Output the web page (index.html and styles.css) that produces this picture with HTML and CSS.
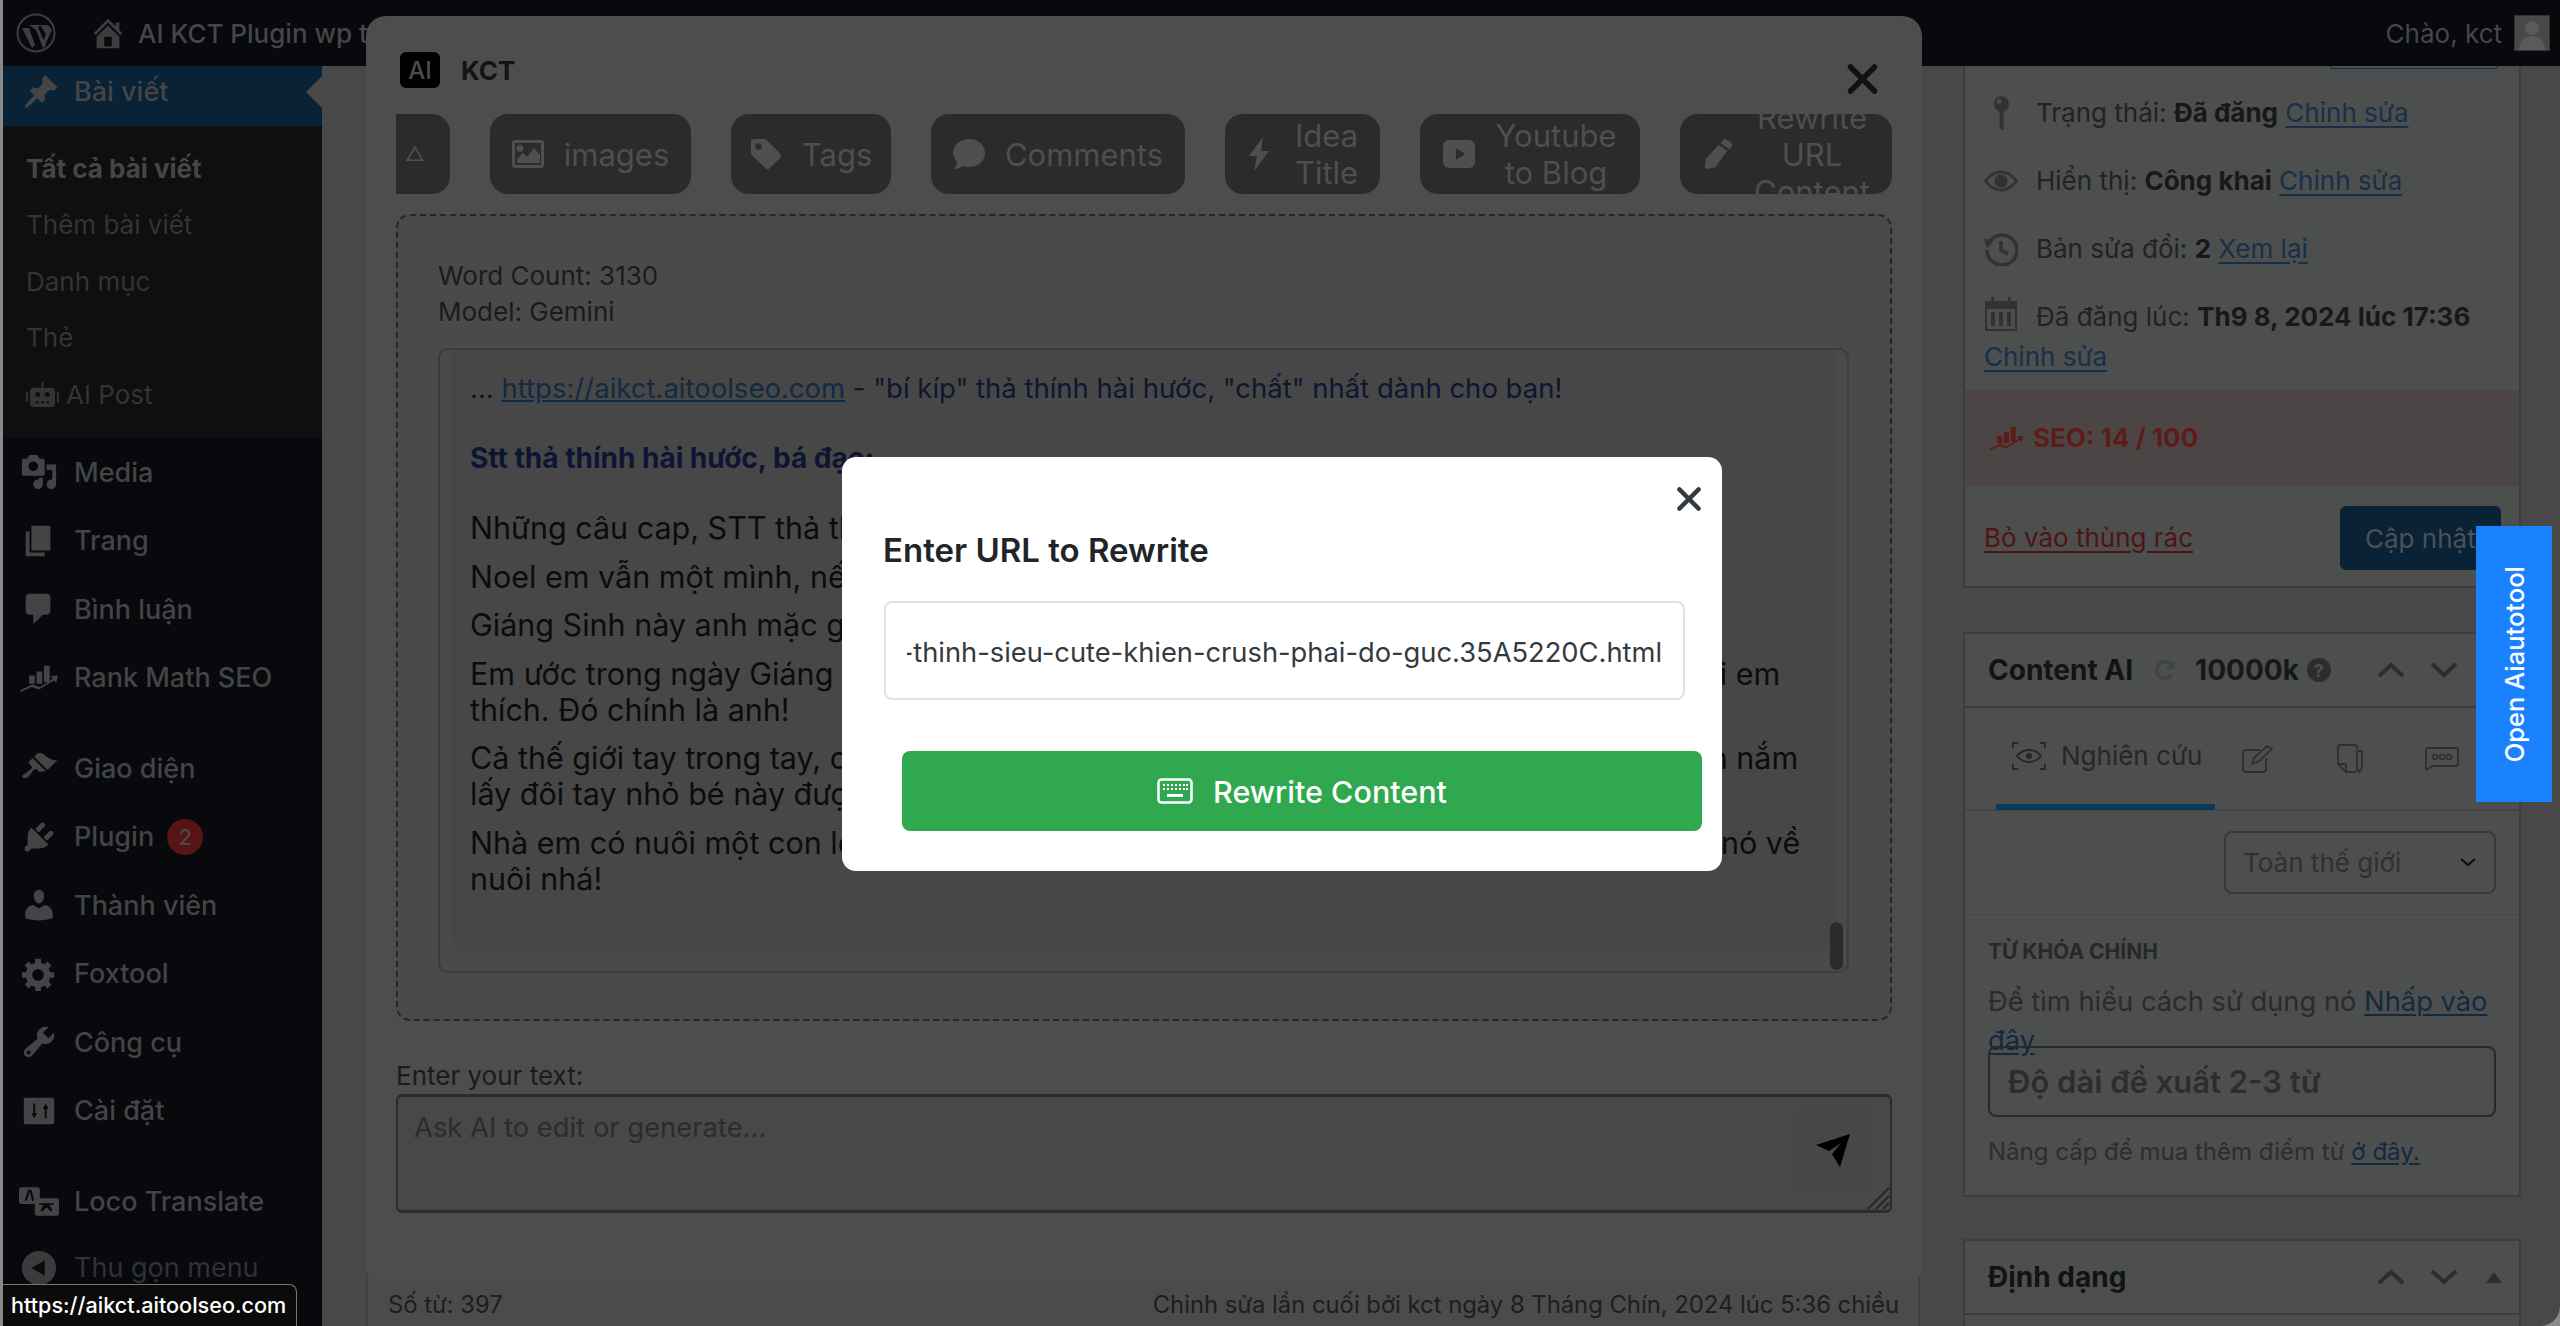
FILE: index.html
```html
<!DOCTYPE html>
<html lang="vi">
<head>
<meta charset="utf-8">
<title>Chỉnh sửa bài viết</title>
<link rel="stylesheet" href="styles.css">
</head>
<body>
<svg class="defs" width="0" height="0">
  <symbol id="chev-up" viewBox="0 0 28 16"><path d="M2 14 14 3l12 11" fill="none" stroke="currentColor" stroke-width="4"/></symbol>
  <symbol id="chev-down" viewBox="0 0 28 16"><path d="M2 2l12 11L26 2" fill="none" stroke="currentColor" stroke-width="4"/></symbol>
  <symbol id="rank" viewBox="0 0 48 34"><path d="M12 14h7v10h-7zM21 9h7v15h-7zM30 2h7v20h-7z"/><path d="M1 32 16 25l9 3 16-10-3-3 9-1-2 9-3-3-18 11-9-3-13 6z"/></symbol>
  <symbol id="close-x" viewBox="0 0 30 30"><path d="M3 3l24 24M27 3 3 27" fill="none" stroke="currentColor" stroke-width="5.500" stroke-linecap="round"/></symbol>
</svg>

<div class="window">
  <header class="adminbar">
    <svg class="wp-logo" viewBox="0 0 40 40"><circle cx="20" cy="20" r="18.5" fill="none" stroke="currentColor" stroke-width="2"/><path d="M6 15h7l6 17-3 3zM13 12h12l-3 2 8 19-3 2-7-18-4-3zM24 12h8l4 5-7 15-2-3 3-8z"/></svg>
    <svg class="home-icon" viewBox="0 0 20 20"><path d="M16 8.5l1.53 1.53-1.06 1.06L10 4.62l-6.47 6.47-1.06-1.06L10 2.5l4 4v-2h2v4zm-6-2.46l6 5.99V18H4v-5.97zM12 17v-5H8v5h4z"/></svg>
    <span class="site-name">AI KCT Plugin wp thử nghiệm</span>
    <span class="howdy">Chào, kct</span>
    <svg class="avatar" viewBox="0 0 36 36"><rect width="36" height="36" fill="#313233"/><rect x="1" y="1" width="34" height="34" fill="#474848"/><circle cx="18" cy="13" r="7" fill="#5a5a5a"/><path d="M5 35c0-10 6-14 13-14s13 4 13 14z" fill="#5a5a5a"/></svg>
  </header>

  <div class="wrap">
    <nav class="sidebar">
      <a class="menu-current">
        <svg viewBox="0 0 20 20"><path d="M10.44 3.02l1.82-1.82 6.36 6.35-1.83 1.82c-1.05-.68-2.48-.57-3.41.36l-.75.75c-.92.93-1.04 2.35-.35 3.41l-1.83 1.82-2.41-2.41-2.8 2.79c-.42.42-3.38 2.71-3.8 2.29s1.86-3.39 2.28-3.81l2.79-2.79L4.1 9.36l1.83-1.82c1.05.69 2.48.57 3.4-.36l.75-.75c.93-.92 1.05-2.35.36-3.41z"/></svg>
        Bài viết
      </a>
      <ul class="submenu">
        <li class="sub-current">Tất cả bài viết</li>
        <li>Thêm bài viết</li>
        <li>Danh mục</li>
        <li>Thẻ</li>
        <li><svg class="robot" viewBox="0 0 34 26"><path d="M8 6h18a4 4 0 0 1 4 4v12a4 4 0 0 1-4 4H8a4 4 0 0 1-4-4V10a4 4 0 0 1 4-4zM16 0h2v6h-2zM0 11h2v10H0zM32 11h2v10h-2z"/><circle cx="12" cy="13" r="2.6" fill="#0d0f11"/><circle cx="22" cy="13" r="2.6" fill="#0d0f11"/><path d="M10 20h3v2h-3zM15.500 20h3v2h-3zM21 20h3v2h-3z" fill="#0d0f11"/></svg>AI Post</li>
      </ul>
      <div class="menu-group">
        <a class="menu-item"><svg viewBox="0 0 20 20"><path d="M13 11V4c0-.55-.45-1-1-1h-1.670L9 1H5L3.670 3H2c-.55 0-1 .45-1 1v7c0 .55.45 1 1 1h10c.55 0 1-.45 1-1zM7 4.500c1.380 0 2.500 1.120 2.500 2.500S8.380 9.500 7 9.500 4.500 8.380 4.500 7 5.620 4.500 7 4.500zM14 6h5v10.500c0 1.380-1.120 2.500-2.500 2.500S14 17.880 14 16.500s1.120-2.500 2.500-2.500c.17 0 .34.02.5.05V9h-3V6zm-4 8.050V13h2v3.500c0 1.380-1.120 2.500-2.500 2.500S7 17.880 7 16.500 8.120 14 9.500 14c.17 0 .34.02.5.05z"/></svg>Media</a>
        <a class="menu-item"><svg viewBox="0 0 20 20"><path d="M6 15V2h10v13H6zm-1 1h8v2H3V5h2v11z"/></svg>Trang</a>
        <a class="menu-item"><svg viewBox="0 0 20 20"><path d="M5 2h9c1.100 0 2 .9 2 2v7c0 1.100-.9 2-2 2h-2l-5 5v-5H5c-1.100 0-2-.9-2-2V4c0-1.100.9-2 2-2z"/></svg>Bình luận</a>
        <a class="menu-item"><svg class="wide" viewBox="0 0 48 34"><use href="#rank"/></svg>Rank Math SEO</a>
      </div>
      <div class="menu-group">
        <a class="menu-item"><svg viewBox="0 0 20 20"><path d="M14.480 11.060L7.410 3.990l1.500-1.500c.5-.56 2.300-.47 3.510.32 1.210.8 1.430 1.280 2.910 2.100 1.180.64 2.450 1.260 4.450.85zm-.71.71L6.700 4.700 4.930 6.470c-.39.39-.39 1.020 0 1.410l1.060 1.060c.39.39.39 1.030 0 1.420-.6.6-1.430 1.110-2.210 1.690-.35.26-.7.53-1.010.84C1.430 13.230.9 14.560 1.620 15.180c.62.62 1.950.19 3.290-1.150.31-.31.58-.66.84-1.010.58-.78 1.090-1.610 1.690-2.210.39-.39 1.030-.39 1.420 0l1.060 1.060c.39.39 1.020.39 1.410 0z"/></svg>Giao diện</a>
        <a class="menu-item"><svg viewBox="0 0 20 20"><path d="M13.110 4.360L9.870 7.600 8 5.730l3.240-3.240c.35-.34 1.050-.2 1.560.32.52.51.66 1.210.31 1.550zm-8 1.770l.91-1.120 9.010 9.010-1.190.84c-.71.71-2.630 1.160-3.820 1.160H6.140L4.900 17.260c-.59.59-1.540.59-2.120 0-.59-.58-.59-1.530 0-2.120l1.240-1.240v-3.880c0-1.130.4-3.190 1.090-3.890zm7.260 3.970l3.240-3.240c.34-.35 1.040-.21 1.550.31.52.51.66 1.210.31 1.550l-3.240 3.250z"/></svg>Plugin<span class="badge">2</span></a>
        <a class="menu-item"><svg viewBox="0 0 20 20"><path d="M10 9.250c-2.270 0-2.730-3.440-2.730-3.440C7 4.020 7.820 2 9.970 2c2.160 0 2.980 2.020 2.710 3.810 0 0-.41 3.440-2.680 3.440zm0 2.570L12.720 10c2.390 0 4.520 2.330 4.520 4.530v2.490s-3.650 1.130-7.240 1.130c-3.650 0-7.240-1.130-7.240-1.130v-2.490c0-2.250 1.940-4.480 4.470-4.480z"/></svg>Thành viên</a>
        <a class="menu-item"><svg viewBox="0 0 20 20"><path d="M18 12h-2.180c-.17.7-.44 1.350-.81 1.930l1.540 1.540-2.100 2.100-1.540-1.540c-.58.36-1.230.63-1.910.79V19H8v-2.180c-.68-.16-1.330-.43-1.910-.79l-1.540 1.540-2.120-2.120 1.540-1.540c-.36-.58-.63-1.230-.79-1.910H1V9.030h2.170c.16-.7.44-1.350.8-1.940L2.430 5.550l2.100-2.100 1.540 1.540c.58-.37 1.240-.64 1.930-.81V2h3v2.180c.68.16 1.330.43 1.910.79l1.540-1.540 2.120 2.120-1.540 1.540c.36.59.64 1.240.8 1.940H18V12zm-8.500 1.500c1.660 0 3-1.340 3-3s-1.340-3-3-3-3 1.340-3 3 1.340 3 3 3z"/></svg>Foxtool</a>
        <a class="menu-item"><svg viewBox="0 0 20 20"><path d="M16.680 9.770c-1.340 1.340-3.300 1.670-4.950.99l-5.410 6.520c-.99.99-2.590.99-3.580 0s-.99-2.590 0-3.570l6.520-5.420c-.68-1.650-.35-3.610.99-4.950 1.280-1.280 3.120-1.620 4.720-1.060l-2.890 2.890 2.820 2.820 2.860-2.870c.53 1.580.18 3.390-1.080 4.650zM3.810 16.210c.4.39 1.040.39 1.430 0 .4-.4.4-1.040 0-1.430-.39-.4-1.030-.4-1.430 0-.39.39-.39 1.030 0 1.430z"/></svg>Công cụ</a>
        <a class="menu-item"><svg viewBox="0 0 20 20"><path fill-rule="evenodd" d="M18 16V4c0-.55-.45-1-1-1H3c-.55 0-1 .45-1 1v12c0 .55.45 1 1 1h14c.55 0 1-.45 1-1zM8 11h1l-1.500 3-1.500-3h1V6h1zM13 9h1v5h-1V9h-1l1.500-3L15 9z"/></svg>Cài đặt</a>
      </div>
      <div class="menu-group menu-group-last">
        <a class="menu-item"><svg class="wide loco" viewBox="0 0 48 34"><path d="M3 0h19a3 3 0 0 1 3 3v14a3 3 0 0 1-3 3H3a3 3 0 0 1-3-3V3a3 3 0 0 1 3-3z"/><path d="M8 16 12 4h2l3 12" fill="none" stroke="#08090c" stroke-width="2.500"/><path fill-rule="evenodd" d="M22 13h23a3 3 0 0 1 3 3v15a3 3 0 0 1-3 3H22a3 3 0 0 1-3-3V16a3 3 0 0 1 3-3zm2 6v2h5l-3 7 2 1 5-5 5 5 2-1-3-7h5v-2z"/></svg>Loco Translate</a>
      </div>
      <a class="menu-collapse"><svg viewBox="0 0 20 20"><path fill-rule="evenodd" d="M10 1a9 9 0 1 1 0 18 9 9 0 0 1 0-18zm3 5-7 4 7 4z"/></svg>Thu gọn menu</a>
    </nav>

    <main class="content">
      <section class="editor">
        <div class="editor-body"></div>
        <div class="statusline"><span>Số từ: 397</span><span>Chỉnh sửa lần cuối bởi kct ngày 8 Tháng Chín, 2024 lúc 5:36 chiều</span></div>
      </section>

      <aside class="side">
        <div class="box box-publish">
          <div class="preview-stub"></div>
          <div class="pub-row">
            <svg class="pub-icon" viewBox="0 0 34 34"><path d="M17 0a8 8 0 0 1 2.500 15.600V34h-2l-2-3V15.600A8 8 0 0 1 17 0zm-2 3a2.500 2.500 0 1 0 0 5 2.500 2.500 0 0 0 0-5z" fill-rule="evenodd"/></svg>
            <span>Trạng thái: <b>Đã đăng</b> <a>Chỉnh sửa</a></span>
          </div>
          <div class="pub-row">
            <svg class="pub-icon" viewBox="0 0 36 24"><path fill-rule="evenodd" d="M18 1c8 0 14 5 18 11-4 6-10 11-18 11S4 18 0 12C4 6 10 1 18 1zm0 3C12 4 7 7.500 3.500 12 7 16.500 12 20 18 20s11-3.500 14.500-8C29 7.500 24 4 18 4zm0 1a7 7 0 1 1 0 14 7 7 0 0 1 0-14z"/></svg>
            <span>Hiển thị: <b>Công khai</b> <a>Chỉnh sửa</a></span>
          </div>
          <div class="pub-row">
            <svg class="pub-icon" viewBox="0 0 34 34"><path fill="none" stroke="currentColor" stroke-width="3.500" d="M6 9a15 15 0 1 1-3 9M17 9v9l7 4"/><path d="M0 7l10 1-7 9z"/></svg>
            <span>Bản sửa đổi: <b>2</b> <a>Xem lại</a></span>
          </div>
          <div class="pub-row pub-row-wrap">
            <svg class="pub-icon" viewBox="0 0 32 34"><path fill-rule="evenodd" d="M0 4h6V0h3v4h14V0h3v4h6v30H0zm2 8v20h28V12zM6 15h4v14H6zm8 0h4v14h-4zm8 0h4v14h-4z"/></svg>
            <span>Đã đăng lúc: <b>Th9 8, 2024 lúc 17:36</b><br><a>Chỉnh sửa</a></span>
          </div>
          <div class="seo-band">
            <svg class="seo-icon" viewBox="0 0 48 34"><use href="#rank"/></svg>
            <b>SEO: 14 / 100</b>
          </div>
          <div class="pub-footer">
            <a class="trash">Bỏ vào thùng rác</a>
            <button class="update-btn">Cập nhật</button>
          </div>
        </div>

        <div class="box box-ai">
          <div class="box-head">
            <h2>Content AI</h2>
            <svg class="refresh" viewBox="0 0 20 20"><path d="M16 5.500a7.500 7.500 0 1 0 0 9" fill="none" stroke="currentColor" stroke-width="3.500"/><path d="M19 1v8h-8z"/></svg>
            <b class="credits">10000k</b>
            <span class="help">?</span>
            <svg class="chev chev-first"><use href="#chev-up"/></svg>
            <svg class="chev"><use href="#chev-down"/></svg>
          </div>
          <div class="ai-tabs">
            <div class="ai-tab-active">
              <svg class="scan" viewBox="0 0 34 28"><path fill="none" stroke="currentColor" stroke-width="1.800" d="M1 6V1h5M28 1h5v5M1 22v5h5M28 27h5v-5M5 14c3-4 7-6 12-6s9 2 12 6c-3 4-7 6-12 6s-9-2-12-6z"/><circle cx="17" cy="14" r="3"/></svg>
              Nghiên cứu
            </div>
            <svg class="tab-ico ico-edit" viewBox="0 0 32 30"><path fill="none" stroke="currentColor" stroke-width="1.800" d="M24 14v11a3 3 0 0 1-3 3H4a3 3 0 0 1-3-3V9a3 3 0 0 1 3-3h14M10 20l2-6L25 2l5 3-13 12z"/></svg>
            <svg class="tab-ico ico-doc" viewBox="0 0 26 30"><path fill="none" stroke="currentColor" stroke-width="1.800" d="M20 5V3a2 2 0 0 0-2-2H3a2 2 0 0 0-2 2v17l8 8h9a2 2 0 0 0 2-2M1 20h6a2 2 0 0 1 2 2v6M20 7h5v17l-2.500 4-2.500-4z"/></svg>
            <svg class="tab-ico ico-chat" viewBox="0 0 34 24"><path fill="none" stroke="currentColor" stroke-width="1.800" d="M3 1h28a2 2 0 0 1 2 2v14a2 2 0 0 1-2 2H8l-7 4V3a2 2 0 0 1 2-2z"/><circle cx="10" cy="10" r="2.500" fill="none" stroke="currentColor" stroke-width="1.500"/><circle cx="17" cy="10" r="2.500" fill="none" stroke="currentColor" stroke-width="1.500"/><circle cx="24" cy="10" r="2.500" fill="none" stroke="currentColor" stroke-width="1.500"/></svg>
          </div>
          <div class="ai-region">
            <div class="region-select">Toàn thế giới<svg viewBox="0 0 16 9"><path d="M1 1l7 6 7-6" fill="none" stroke="#0b0b0b" stroke-width="2"/></svg></div>
          </div>
          <div class="ai-keyword">
            <h3>TỪ KHÓA CHÍNH</h3>
            <p class="kw-help">Để tìm hiểu cách sử dụng nó <a>Nhấp vào đây</a></p>
            <div class="kw-input">Độ dài đề xuất 2-3 từ</div>
            <p class="kw-upgrade">Nâng cấp để mua thêm điểm từ <a>ở đây.</a></p>
          </div>
        </div>

        <div class="box box-format">
          <div class="box-head">
            <h2>Định dạng</h2>
            <svg class="chev chev-far"><use href="#chev-up"/></svg>
            <svg class="chev"><use href="#chev-down"/></svg>
            <span class="caret"></span>
          </div>
        </div>
      </aside>
    </main>
  </div>

  <div class="kct-modal">
    <div class="kct-head">
      <span class="kct-logo">AI</span>
      <strong>KCT</strong>
      <svg class="kct-close"><use href="#close-x"/></svg>
    </div>
    <div class="kct-tabs">
      <div class="kct-tab tab-cut">△</div>
      <div class="kct-tab tab-images"><svg viewBox="0 0 32 28"><path fill-rule="evenodd" d="M3 0h26a3 3 0 0 1 3 3v22a3 3 0 0 1-3 3H3a3 3 0 0 1-3-3V3a3 3 0 0 1 3-3zm0 3v22h26V3zm5 2a3.500 3.500 0 1 1 0 7 3.500 3.500 0 0 1 0-7zM5 23v-4l6-6 4 4 7-9 6 7v8z"/></svg><span>images</span></div>
      <div class="kct-tab tab-tags"><svg viewBox="0 0 28 28"><path fill-rule="evenodd" d="M0 3a3 3 0 0 1 3-3h9c1 0 2 .4 2.700 1.100l12 12a3.500 3.500 0 0 1 0 5l-8.600 8.800a3.500 3.500 0 0 1-5 0L1 15.500A4 4 0 0 1 0 13zm7 1a3 3 0 1 0 0 6 3 3 0 0 0 0-6z"/></svg><span>Tags</span></div>
      <div class="kct-tab tab-comments"><svg viewBox="0 0 32 30"><path d="M16 0c9 0 16 6 16 14s-7 14-16 14c-2.300 0-4.500-.4-6.400-1.100C8 28.500 4.500 30 1 30c1.500-1.500 3-4 3.300-6.700C1.600 20.800 0 17.600 0 14 0 6 7 0 16 0z"/></svg><span>Comments</span></div>
      <div class="kct-tab tab-idea"><svg class="bolt" viewBox="0 0 22 34"><path d="M15 0 1 19h8L6 34l15-20h-8z"/></svg><span>Idea<br>Title</span></div>
      <div class="kct-tab tab-youtube"><svg viewBox="0 0 32 28"><path fill-rule="evenodd" d="M6 0h20a6 6 0 0 1 6 6v16a6 6 0 0 1-6 6H6a6 6 0 0 1-6-6V6a6 6 0 0 1 6-6zm7 8v12l9-6z"/></svg><span>Youtube<br>to Blog</span></div>
      <div class="kct-tab tab-rewrite"><svg viewBox="0 0 32 34"><path d="M24 0c1 0 2 .4 3 1.200l3 2.300c2 1.600 2.300 3.600 1 5.500l-2 2.800-10-7 2-3C22 .7 23 0 24 0zM16.500 6.500l10 7L13 32l-10 2-2-1 1-10z"/></svg><span>Rewrite<br>URL<br>Content</span></div>
    </div>
    <div class="kct-output">
      <div class="word-meta">Word Count: 3130<br>Model: Gemini</div>
      <div class="result-box">
        <div class="result-text">
          <p class="lead">... <a>https://aikct.aitoolseo.com</a> - "bí kíp" thả thính hài hước, "chất" nhất dành cho bạn!</p>
          <h4>Stt thả thính hài hước, bá đạo:</h4>
          <p>Những câu cap, STT thả thính Giáng Sinh hài hước, bá đạo nhất</p>
          <p>Noel em vẫn một mình, nếu anh cũng vậy thì mình đi chơi chung nha</p>
          <p>Giáng Sinh này anh mặc gì cũng được, miễn là bên cạnh có em</p>
          <p>Em ước trong ngày Giáng Sinh này ông già Noel sẽ mang đến cho em món quà&thinsp; là người em<br>thích. Đó chính là anh!</p>
          <p>Cả thế giới tay trong tay, còn em vẫn một mình. Anh ơi, anh muốn nắm tay em,&thinsp;&thinsp; hãy đến nắm<br>lấy đôi tay nhỏ bé này được không?</p>
          <p>Nhà em có nuôi một con lợn, Giáng Sinh này em muốn tặng anh, nếu anh thích thì đem nó về<br>nuôi nhá!</p>
        </div>
        <span class="result-thumb"></span>
      </div>
    </div>
    <label class="ask-label">Enter your text:</label>
    <div class="ask-box">
      <span class="ask-holder">Ask AI to edit or generate...</span>
      <div class="send-btn"><svg viewBox="0 0 36 36"><path d="M35 1 25 34 17 21l9-11-12 8L1 12z"/></svg></div>
      <svg class="resize-grip" viewBox="0 0 24 24"><path d="M23 2 2 23M23 10 10 23M23 17l-6 6" fill="none" stroke="#26272a" stroke-width="2"/></svg>
    </div>
  </div>

  <div class="url-modal">
    <svg class="url-close"><use href="#close-x"/></svg>
    <h5>Enter URL to Rewrite</h5>
    <div class="url-input"><div class="url-scroll"><span>https://aikct.aitoolseo.com/stt-tha-thinh-sieu-cute-khien-crush-phai-do-guc.35A5220C.html</span></div></div>
    <button class="url-submit">
      <svg viewBox="0 0 36 26"><rect x="1.500" y="1.500" width="33" height="23" rx="3" fill="none" stroke="#fff" stroke-width="2.500"/><path d="M6 6h2v2H6zM10 6h2v2h-2zM14 6h2v2h-2zM18 6h2v2h-2zM22 6h2v2h-2zM26 6h2v2h-2zM6 10h2v2H6zM10 10h2v2h-2zM14 10h2v2h-2zM18 10h2v2h-2zM22 10h2v2h-2zM26 10h2v2h-2zM29 6h2v2h-2zM29 10h2v2h-2zM10 16h16v3H10z" fill="#fff"/></svg>
      Rewrite Content
    </button>
  </div>

  <div class="open-tool"><span>Open Aiautotool</span></div>
  <div class="link-status">https://aikct.aitoolseo.com</div>
</div>
</body>
</html>
```

FILE: styles.css
```css
* {
  box-sizing: border-box;
}

html, body {
  margin: 0;
  height: 100%;
  overflow: hidden;
}

body {
  background: #8a8a8a;
  font-family: Inter, "Noto Sans", sans-serif;
  font-size: 26px;
  color: #1e2022;
}

.defs {
  position: absolute;
}

p, h2, h3, h4, h5 {
  margin: 0;
}

.window {
  position: relative;
  height: 1326px;
  margin-left: 3px;
  overflow: hidden;
  background: #484848;
  border-bottom-right-radius: 20px;
  display: flex;
  flex-direction: column;
}

/* thanh tren cung */
.adminbar {
  height: 66px;
  flex: none;
  background: #07090c;
  color: #3c3d3e;
  display: flex;
  align-items: center;
}

.wp-logo {
  width: 40px;
  height: 40px;
  margin-left: 13px;
  fill: currentColor;
}

.home-icon {
  width: 38px;
  height: 38px;
  margin-left: 33px;
  fill: currentColor;
}

.site-name {
  margin-left: 11px;
  font-weight: 500;
  white-space: nowrap;
  color: #454647;
}

.howdy {
  margin-left: auto;
  color: #464748;
}

.avatar {
  width: 36px;
  height: 36px;
  margin: 0 10px 0 12px;
}

.wrap {
  flex: 1;
  min-height: 0;
  display: flex;
}

/* menu trai */
.sidebar {
  width: 319px;
  flex: none;
  background: #08090c;
  color: #434445;
  font-size: 27px;
  font-weight: 500;
}

.sidebar svg {
  fill: currentColor;
  flex: none;
}

.menu-current {
  height: 60px;
  padding-bottom: 9px;
  background: #0a2235;
  color: #454545;
  display: flex;
  align-items: center;
  position: relative;
}

.menu-current svg {
  width: 38px;
  height: 38px;
  margin: 0 14px 0 19px;
}

.menu-current::after {
  content: "";
  position: absolute;
  right: 0;
  top: 10px;
  border: 16px solid transparent;
  border-right-color: #484848;
  border-left: 0;
}

.submenu {
  list-style: none;
  margin: 0;
  padding: 14px 0 17px;
  height: 312px;
  background: #0d0f11;
  color: #333435;
  font-weight: 400;
  font-size: 26px;
}

.submenu li {
  height: 56.5px;
  padding-left: 23px;
  display: flex;
  align-items: center;
}

.submenu .sub-current {
  font-weight: 700;
  color: #464646;
}

.robot {
  width: 33px;
  height: 25px;
  margin-right: 7px;
}

.menu-group {
  margin-bottom: 22px;
}

.menu-group-last {
  margin-bottom: 0;
}

.menu-item {
  height: 68.5px;
  display: flex;
  align-items: center;
}

.menu-item svg {
  width: 38px;
  height: 38px;
  margin: 0 16px 0 17px;
}

.menu-item svg.wide {
  width: 40px;
  height: 28px;
  margin: 0 15px 0 16px;
}

.menu-item svg.loco {
  height: 31px;
}

.badge {
  width: 36px;
  height: 36px;
  margin-left: 13px;
  border-radius: 50%;
  background: #561414;
  color: #4a4a4a;
  font-size: 22px;
  display: flex;
  align-items: center;
  justify-content: center;
}

.menu-collapse {
  height: 60px;
  margin-top: 2px;
  color: #313233;
  font-weight: 400;
  display: flex;
  align-items: center;
}

.menu-collapse svg {
  width: 38px;
  height: 38px;
  margin: 0 16px 0 17px;
  color: #3a3b3c;
}

/* phan noi dung phia sau */
.content {
  flex: 1;
  min-width: 0;
  display: flex;
}

.editor {
  width: 1554px;
  margin-left: 44px;
  flex: none;
  display: flex;
  flex-direction: column;
  border: solid #3f3f3f;
  border-width: 0 2px;
  background: #4a4b4b;
}

.editor-body {
  flex: 1;
}

.statusline {
  height: 40px;
  margin-bottom: 2px;
  padding: 0 19px 0 20px;
  font-size: 23.8px;
  color: #1d1e20;
  display: flex;
  align-items: center;
  justify-content: space-between;
}

.side {
  width: 558px;
  margin-left: 43px;
  flex: none;
}

.box {
  border: 2px solid #3c3d3e;
  background: #4d4e4e;
  margin-bottom: 42px;
}

.box-publish {
  height: 522px;
  border-top: 0;
  margin-bottom: 44px;
}

.preview-stub {
  width: 168px;
  height: 3px;
  margin-left: 365px;
  border: 1px solid #14314a;
  border-top: 0;
  border-radius: 0 0 5px 5px;
}

.pub-row {
  padding-left: 19px;
  min-height: 40px;
  margin-top: 28px;
  line-height: 40px;
  color: #202224;
  display: flex;
}

.pub-row:nth-child(2) {
  margin-top: 24px;
}

.pub-row b {
  color: #17181a;
  font-weight: 650;
}

.pub-row a {
  color: #16304a;
  text-decoration: underline;
  text-underline-offset: 4px;
}

.pub-icon {
  width: 34px;
  height: 34px;
  margin: 3px 18px 0 0;
  flex: none;
  fill: #303234;
  color: #303234;
}

.pub-row-wrap {
  display: block;
  position: relative;
  text-indent: 52px;
}

.pub-row-wrap .pub-icon {
  position: absolute;
  left: 19px;
  top: 0;
  margin: 0;
}

.pub-row-wrap a {
  text-indent: 0;
  display: inline-block;
}

.seo-band {
  height: 96px;
  margin-top: 13px;
  padding-left: 23px;
  background: #4b4645;
  border-bottom: 1px solid #464646;
  color: #5e1c19;
  display: flex;
  align-items: center;
  gap: 9px;
}

.seo-icon {
  width: 36px;
  height: 26px;
  fill: #5e1c19;
}

.seo-band b {
  font-weight: 700;
}

.pub-footer {
  padding: 20px 18px 0 19px;
  display: flex;
  align-items: center;
  justify-content: space-between;
}

.trash {
  color: #501414;
  text-decoration: underline;
  text-underline-offset: 4px;
  margin-top: -2px;
}

.update-btn {
  width: 161px;
  height: 64px;
  border: 0;
  border-radius: 6px;
  background: #0a2235;
  color: #4d5257;
  font: inherit;
  text-align: left;
  padding-left: 25px;
}

.box-head {
  height: 74px;
  padding-left: 23px;
  border-bottom: 2px solid #3c3d3e;
  display: flex;
  align-items: center;
}

.box-head h2 {
  font-size: 28px;
  font-weight: 700;
  color: #121315;
}

.refresh {
  width: 22px;
  height: 22px;
  margin-left: 21px;
  flex: none;
  fill: #404448;
  color: #404448;
}

.credits {
  margin-left: 19px;
  font-size: 28px;
  font-weight: 700;
  color: #17181a;
}

.help {
  width: 24px;
  height: 24px;
  margin-left: 8px;
  flex: none;
  border-radius: 50%;
  background: #2c2d2f;
  color: #4d4e4e;
  font-size: 18px;
  font-weight: 700;
  display: flex;
  align-items: center;
  justify-content: center;
}

.chev {
  width: 28px;
  height: 16px;
  margin-left: 25px;
  flex: none;
  color: #2c2d2f;
}

.chev-first {
  margin-left: 46px;
}

.chev-far {
  margin-left: auto;
}

.caret {
  margin: 0 17px 0 28px;
  border: 8px solid transparent;
  border-bottom: 11px solid #2c2d2f;
  border-top: 0;
}

.ai-tabs {
  height: 103px;
  border-bottom: 2px solid #434445;
  display: flex;
  align-items: center;
}

.ai-tab-active {
  width: 219px;
  height: 103px;
  margin-left: 31px;
  padding-left: 16px;
  border-bottom: 6px solid #0a3a5a;
  color: #25272a;
  display: flex;
  align-items: center;
  gap: 15px;
}

.scan {
  width: 34px;
  height: 28px;
  fill: #25272a;
  color: #25272a;
}

.tab-ico {
  color: #2d2f31;
  flex: none;
}

.ico-edit {
  width: 32px;
  height: 30px;
  margin-left: 27px;
}

.ico-doc {
  width: 26px;
  height: 30px;
  margin-left: 63px;
}

.ico-chat {
  width: 34px;
  height: 24px;
  margin-left: 62px;
}

.ai-region {
  height: 104px;
  padding: 20px 23px 0 0;
  border-bottom: 1px solid #454646;
  display: flex;
  justify-content: flex-end;
}

.region-select {
  width: 272px;
  height: 63px;
  padding: 0 18px 0 17px;
  border: 2px solid #38393b;
  border-radius: 8px;
  color: #2f3032;
  display: flex;
  align-items: center;
  justify-content: space-between;
}

.region-select svg {
  width: 16px;
  height: 9px;
}

.ai-keyword {
  padding: 24px 23px 26px 23px;
}

.ai-keyword h3 {
  font-size: 21px;
  font-weight: 700;
  color: #27282a;
  line-height: 26px;
}

.kw-help {
  margin-top: 17px;
  height: 64px;
  font-size: 27.3px;
  line-height: 39px;
  color: #2a2b2d;
}

.kw-help a, .kw-upgrade a {
  color: #122a40;
  text-decoration: underline;
  text-underline-offset: 3px;
}

.kw-input {
  height: 71px;
  padding-left: 18px;
  border: 2px solid #28292b;
  border-radius: 8px;
  font-size: 31px;
  font-weight: 600;
  color: #2c2d2e;
  display: flex;
  align-items: center;
  position: relative;
}

.kw-upgrade {
  margin-top: 18px;
  font-size: 24px;
  line-height: 34px;
  color: #2c2d2f;
}

.box-format {
  height: 200px;
}

/* popup KCT */
.kct-modal {
  position: absolute;
  left: 363px;
  top: 16px;
  width: 1556px;
  height: 1270px;
  padding: 36px 30px 0;
  border-radius: 20px;
  background: #4d4d4d;
}

.kct-head {
  height: 36px;
  padding-left: 4px;
  display: flex;
  align-items: center;
  position: relative;
}

.kct-logo {
  width: 40px;
  height: 36px;
  border-radius: 6px;
  background: #000;
  color: #4d4d4d;
  font-size: 24px;
  font-weight: 500;
  display: flex;
  align-items: center;
  justify-content: center;
}

.kct-head strong {
  margin-left: 21px;
  font-weight: 700;
  color: #131313;
}

.kct-close {
  position: absolute;
  right: 14px;
  top: 12px;
  width: 31px;
  height: 30px;
  color: #111;
}

.kct-tabs {
  height: 80px;
  margin-top: 26px;
  overflow: hidden;
  display: flex;
  justify-content: flex-end;
  gap: 40px;
}

.kct-tab {
  height: 80px;
  flex: none;
  border-radius: 18px;
  background: #2b2b2b;
  color: #4f4f4f;
  font-size: 31px;
  line-height: 37px;
  text-align: center;
  display: flex;
  align-items: center;
  justify-content: center;
  gap: 20px;
  overflow: hidden;
}

.kct-tab svg {
  width: 32px;
  height: 30px;
  flex: none;
  fill: #4f4f4f;
}

.kct-tab svg.bolt {
  width: 24px;
  height: 34px;
}

.tab-cut {
  width: 120px;
  justify-content: flex-end;
  padding-right: 25px;
  font-size: 20px;
}

.tab-images { width: 201px; }
.tab-tags { width: 160px; }
.tab-comments { width: 254px; }
.tab-idea { width: 155px; gap: 24px; }
.tab-youtube { width: 220px; }
.tab-rewrite { width: 212px; }

.kct-output {
  height: 807px;
  margin-top: 20px;
  padding: 42px 41px 0 40px;
  border: 2px dashed #262626;
  border-radius: 14px;
  background: #4a4a4a;
}

.word-meta {
  line-height: 36px;
  font-size: 26px;
  color: #1b1b1b;
}

.result-box {
  height: 625px;
  margin-top: 18px;
  padding: 0 10px 20px;
  border: 2px solid #3c3c3c;
  border-radius: 10px;
  position: relative;
}

.result-text {
  height: 602px;
  padding: 20px 20px 0;
  border-radius: 0 0 18px 18px;
  background: #474747;
  font-size: 30.5px;
  line-height: 36px;
  color: #0c0c0c;
  overflow: hidden;
}

.result-text p {
  margin-bottom: 12.6px;
  white-space: nowrap;
}

.result-text .lead {
  margin-bottom: 34px;
  font-size: 27.5px;
  color: #0f1630;
}

.lead a {
  color: #122a44;
  text-decoration: underline;
}

.result-text h4 {
  margin-bottom: 34px;
  font-size: 28px;
  font-weight: 700;
  color: #0e1533;
}

.result-thumb {
  position: absolute;
  right: 4px;
  bottom: 1px;
  width: 13px;
  height: 48px;
  border-radius: 7px;
  background: #2b2b2b;
}

.ask-label {
  display: block;
  height: 36px;
  margin-top: 37px;
  line-height: 36px;
  font-size: 26px;
  color: #1b1b1b;
}

.ask-box {
  height: 119px;
  border: solid #2b2c2e;
  border-width: 3px 2px;
  border-radius: 6px;
  background: #474849;
  position: relative;
}

.ask-holder {
  position: absolute;
  left: 16px;
  top: 13px;
  font-size: 27.4px;
  color: #2b2c2e;
}

.send-btn {
  position: absolute;
  right: 18px;
  top: 11px;
  width: 78px;
  height: 85px;
  border-radius: 10px;
  background: #464748;
  display: flex;
  align-items: center;
  justify-content: center;
}

.send-btn svg {
  width: 36px;
  height: 36px;
}

.resize-grip {
  position: absolute;
  right: 0;
  bottom: 0;
  width: 24px;
  height: 24px;
}

/* popup nhap url */
.url-modal {
  position: absolute;
  left: 839px;
  top: 457px;
  width: 880px;
  height: 414px;
  padding: 65px 19px 0 41px;
  border-radius: 14px;
  background: #fff;
  color: #212529;
}

.url-close {
  position: absolute;
  right: 21px;
  top: 30px;
  width: 24px;
  height: 24px;
  color: #343a40;
}

.url-modal h5 {
  height: 56px;
  margin-bottom: 23px;
  font-size: 33px;
  font-weight: 600;
  line-height: 56px;
}

.url-input {
  width: 801px;
  height: 99px;
  margin-left: 1px;
  padding: 4px 21px 0 21px;
  border: 2px solid #dee2e6;
  border-radius: 8px;
  color: #343a40;
  font-size: 27.3px;
  display: flex;
  align-items: center;
}

.url-scroll {
  flex: 1;
  min-width: 0;
  overflow: hidden;
  display: flex;
  justify-content: flex-end;
  white-space: nowrap;
}

.url-scroll span {
  flex: none;
}

.url-submit {
  width: 800px;
  height: 80px;
  margin: 51px 0 0 19px;
  border: 0;
  border-radius: 8px;
  background: #2fa84f;
  color: #fff;
  font: inherit;
  font-size: 30.5px;
  font-weight: 500;
  display: flex;
  align-items: center;
  justify-content: center;
  gap: 20px;
}

.url-submit svg {
  width: 36px;
  height: 26px;
}

.open-tool {
  position: absolute;
  left: 2473px;
  top: 526px;
  width: 76px;
  height: 276px;
  background: #1a82ff;
  color: #fff;
  font-size: 25.5px;
  font-weight: 500;
  display: flex;
  align-items: center;
  justify-content: center;
}

.open-tool span {
  writing-mode: vertical-rl;
  transform: rotate(180deg);
  white-space: nowrap;
}

.link-status {
  position: absolute;
  left: 0;
  bottom: 0;
  height: 42px;
  width: 294px;
  padding: 0 8px;
  border: 1px solid #777;
  border-left: 0;
  border-bottom: 0;
  border-radius: 0 8px 0 16px;
  background: #0b0b0b;
  color: #fff;
  font-size: 21.6px;
  font-weight: 500;
  line-height: 40px;
  white-space: nowrap;
}
```
